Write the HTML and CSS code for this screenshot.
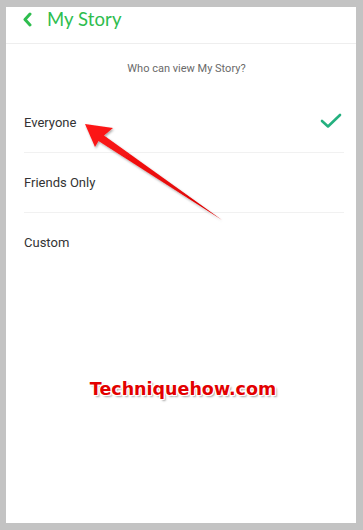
FILE: index.html
```html
<!DOCTYPE html>
<html>
<head>
<meta charset="utf-8">
<link rel="stylesheet" href="styles.css">
</head>
<body>
<div class="frame">
  <div class="screen">
    <header class="topbar">
      <svg class="back" width="11" height="15" viewBox="0 0 11 15"><path d="M8 2 L3 7.5 L8 13" fill="none" stroke="#2ebd4e" stroke-width="3" stroke-linecap="round" stroke-linejoin="round"/></svg>
      <span class="title">My Story</span>
    </header>
    <div class="subtitle">Who can view My Story?</div>
    <ul class="options">
      <li class="option">
        <span>Everyone</span>
        <svg class="check" width="22" height="16" viewBox="0 0 22 16"><path d="M2 8 L8 13.5 L20 2" fill="none" stroke="#24b07f" stroke-width="2.6" stroke-linecap="round" stroke-linejoin="round"/></svg>
      </li>
      <li class="option"><span>Friends Only</span></li>
      <li class="option"><span>Custom</span></li>
    </ul>
    <div class="watermark">Techniquehow.com</div>
    <svg class="arrow" width="363" height="530" viewBox="0 0 363 530">
      <defs>
        <filter id="sh" x="-20%" y="-20%" width="140%" height="140%">
          <feDropShadow dx="1" dy="1.5" stdDeviation="1" flood-color="#000" flood-opacity="0.35"/>
        </filter>
        <linearGradient id="rg" x1="0" y1="0" x2="1" y2="1">
          <stop offset="0" stop-color="#ff1a1a"/>
          <stop offset="1" stop-color="#d90000"/>
        </linearGradient>
      </defs>
      <polygon filter="url(#sh)" fill="url(#rg)" points="85,124 113,128 104,135.5 222,220 98.5,141 95,147"/>
    </svg>
  </div>
</div>
</body>
</html>
```
FILE: styles.css
```css
* { box-sizing: border-box; }
html, body { margin: 0; padding: 0; }
body {
  width: 363px;
  height: 530px;
  background: #c3c3c3;
  font-family: Roboto, "Noto Sans", sans-serif;
  overflow: hidden;
}
.frame {
  padding: 7px 7px 7px 6px;
  height: 530px;
}
.screen {
  position: relative;
  background: #fff;
  height: 516px;
}
.topbar {
  height: 37px;
  border-bottom: 1px solid #eeeeee;
  display: flex;
  align-items: center;
  padding-left: 16px;
  padding-bottom: 12px;
}
.back { margin-right: 14px; margin-top: 1px; }
.title {
  font-family: Lato, "Open Sans", sans-serif;
  font-size: 18.5px;
  color: #2ebd4e;
  letter-spacing: 0.1px;
}
.subtitle {
  height: 49px;
  display: flex;
  align-items: center;
  justify-content: center;
  padding-left: 11px;
  padding-bottom: 1px;
  font-size: 11px;
  color: #6a6a6a;
}
.options {
  list-style: none;
  margin: 0;
  padding: 0 12px 0 18px;
}
.option {
  height: 60px;
  display: flex;
  align-items: center;
  justify-content: space-between;
  border-bottom: 1px solid #f1f1f1;
  font-size: 13px;
  color: #333;
  padding-bottom: 1px;
}
.option:last-child { border-bottom: none; }
.check { margin-right: 2px; margin-bottom: 2px; }
.watermark {
  position: absolute;
  left: 0;
  right: 0;
  top: 372px;
  text-align: center;
  padding-left: 4px;
  font-family: "DejaVu Sans", sans-serif;
  font-weight: bold;
  font-size: 17.5px;
  color: #e30000;
  text-shadow:
    1px 0 0 #fff, -1px 0 0 #fff, 0 1px 0 #fff, 0 -1px 0 #fff,
    1px 1px 0 #fff, -1px -1px 0 #fff, 1px -1px 0 #fff, -1px 1px 0 #fff,
    2px 2px 2px rgba(0,0,0,0.35);
}
.arrow {
  position: absolute;
  left: -6px;
  top: -7px;
  pointer-events: none;
}
```
